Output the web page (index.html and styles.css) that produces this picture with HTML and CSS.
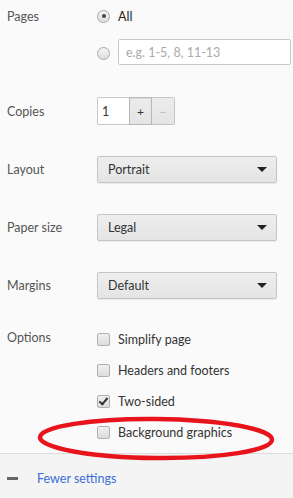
FILE: index.html
```html
<!DOCTYPE html>
<html lang="en">
<head>
  <meta charset="UTF-8" />
  <meta name="viewport" content="width=device-width, initial-scale=1.0" />
  <title>Print settings</title>
  <link rel="stylesheet" href="styles.css">
</head>
<body>
  <div class="settings">
    <div class="section pages">
      <div class="row">
        <div class="label">Pages</div>
        <label class="radio-line"><span class="radio checked"></span><span class="text strong">All</span></label>
      </div>
      <div class="row row-custom">
        <div class="label"></div>
        <span class="radio"></span>
        <input class="pages-input" type="text" placeholder="e.g. 1-5, 8, 11-13">
      </div>
    </div>

    <div class="section copies">
      <div class="row">
        <div class="label">Copies</div>
        <div class="stepper">
          <input class="copies-input" type="text" value="1">
          <button class="step plus">+</button>
          <button class="step minus">&minus;</button>
        </div>
      </div>
    </div>

    <div class="section">
      <div class="row">
        <div class="label">Layout</div>
        <div class="select">Portrait<span class="caret"></span></div>
      </div>
    </div>

    <div class="section">
      <div class="row">
        <div class="label">Paper size</div>
        <div class="select">Legal<span class="caret"></span></div>
      </div>
    </div>

    <div class="section">
      <div class="row">
        <div class="label">Margins</div>
        <div class="select">Default<span class="caret"></span></div>
      </div>
    </div>

    <div class="section options">
      <div class="label options-label">Options</div>
      <div class="checks">
        <label class="check-line"><span class="checkbox"></span>Simplify page</label>
        <label class="check-line"><span class="checkbox"></span>Headers and footers</label>
        <label class="check-line"><span class="checkbox checked"></span>Two-sided</label>
        <label class="check-line"><span class="checkbox"></span>Background graphics</label>
      </div>
    </div>
  </div>

  <div class="footer">
    <span class="collapse-bar"></span>
    <a class="fewer" href="#">Fewer settings</a>
  </div>

  <svg class="annotation" width="293" height="498" viewBox="0 0 293 498">
    <ellipse cx="156" cy="438.5" rx="116" ry="19.5" fill="none" stroke="#e8141c" stroke-width="4.5" transform="rotate(0.6 156 438.5)"/>
  </svg>
</body>
</html>
```

FILE: styles.css
```css
body {
  margin: 0;
  background: #fafafa;
  font-family: Lato, "Open Sans", sans-serif;
  font-size: 12.5px;
  color: #333;
  height: 498px;
  position: relative;
  overflow: hidden;
}
.settings {
  padding: 3px 16px 0 7px;
}
.row {
  display: flex;
  align-items: center;
  height: 26px;
}
.label {
  width: 90px;
  flex: none;
  color: #555;
}
.row-custom {
  margin-top: 11px;
}
.radio-line {
  display: flex;
  align-items: center;
}
.radio {
  width: 11px;
  height: 11px;
  border: 1px solid #a8a8a8;
  border-radius: 50%;
  background: linear-gradient(#f4f4f4, #dedede);
  position: relative;
  flex: none;
  margin-right: 8px;
}
.radio.checked::after {
  content: "";
  position: absolute;
  left: 3.5px;
  top: 3.5px;
  width: 4px;
  height: 4px;
  border-radius: 50%;
  background: #444;
}
.text.strong {
  color: #222;
}
.pages-input {
  flex: 1;
  height: 26px;
  box-sizing: border-box;
  border: 1px solid #c8c8c8;
  border-radius: 2px;
  background: #fff;
  padding: 0 7px;
  font: inherit;
  margin-top: -2px;
}
.pages-input::placeholder {
  color: #aaa;
}
.copies {
  margin-top: 31px;
}
.copies .row {
  height: 28px;
}
.stepper {
  display: flex;
  height: 28px;
}
.copies-input {
  width: 32px;
  box-sizing: border-box;
  border: 1px solid #c8c8c8;
  border-right: none;
  border-radius: 2px 0 0 2px;
  background: #fff;
  padding: 0 4px;
  font: inherit;
  color: #333;
}
.step {
  width: 23px;
  border: 1px solid #c4c4c4;
  background: linear-gradient(#ececec, #e4e4e4);
  font: inherit;
  font-size: 12px;
  padding: 0;
}
.step.plus {
  color: #333;
  border-color: #b8b8b8;
  box-shadow: inset 0 1px 1px rgba(0,0,0,0.08);
}
.step.minus {
  border-left: none;
  color: #bbb;
  border-radius: 0 2px 2px 0;
}
.section {
  margin-top: 31px;
}
.section.pages {
  margin-top: 0;
}
.section .select {
  flex: 1;
}
.select {
  height: 27px;
  box-sizing: border-box;
  border: 1px solid #c6c6c6;
  border-radius: 2px;
  background: linear-gradient(#eeeeee, #e4e4e4);
  box-shadow: 0 1px 1px rgba(0,0,0,0.07);
  display: flex;
  align-items: center;
  padding: 0 9px 0 10px;
  color: #333;
}
.section:not(.pages):not(.copies) .row {
  height: 27px;
}
.caret {
  margin-left: auto;
  width: 0;
  height: 0;
  border-left: 5px solid transparent;
  border-right: 5px solid transparent;
  border-top: 5px solid #222;
}
.options {
  margin-top: 25px;
  display: flex;
}
.options-label {
  padding-top: 6px;
}
.checks {
  display: flex;
  flex-direction: column;
}
.check-line {
  height: 31px;
  display: flex;
  align-items: center;
  color: #333;
}
.checkbox {
  width: 11px;
  height: 11px;
  border: 1px solid #b0b0b0;
  border-radius: 2px;
  background: linear-gradient(#f0f0f0, #dcdcdc);
  margin-right: 8px;
  position: relative;
  flex: none;
}
.checkbox.checked::after {
  content: "";
  position: absolute;
  left: 3px;
  top: 0px;
  width: 3px;
  height: 7px;
  border: solid #333;
  border-width: 0 2px 2px 0;
  transform: rotate(40deg);
}
.footer {
  margin-top: 5px;
  border-top: 1px solid #dcdcdc;
  height: 48px;
  background: #f4f4f4;
  display: flex;
  align-items: center;
  padding-left: 7px;
}
.collapse-bar {
  width: 11px;
  height: 3px;
  background: #666;
  margin-right: 19px;
}
.fewer {
  color: #3a6fd6;
  text-decoration: none;
}
.annotation {
  position: absolute;
  left: 0;
  top: 0;
  pointer-events: none;
}
```
